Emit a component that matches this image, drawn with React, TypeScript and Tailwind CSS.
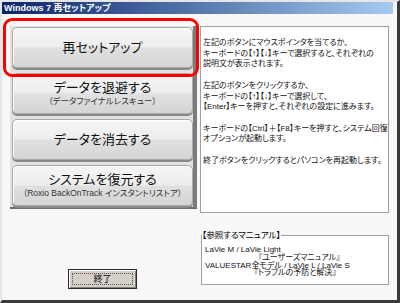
import React from "react";

function Btn({ title, sub }: { title: string; sub?: string }) {
  return (
    <div className="h-[41px] rounded-[5px] border border-[#a9a9a9] bg-[linear-gradient(#f6f6f6,#ededed_48%,#e0e0e0_52%,#d5d5d5)] shadow-[inset_1px_1px_0_#ffffff,0_2px_0_#8a8a8a] flex flex-col items-center justify-center">
      <div className="text-[13px] leading-[15px] text-[#111111]">{title}</div>
      {sub && <div className="text-[8.5px] leading-[11px] text-[#333333] mt-[1px]">{sub}</div>}
    </div>
  );
}

export default function App() {
  return (
    <div className="w-[400px] h-[303px] flex flex-col bg-[#f8f8f8] border-l-2 border-t-2 border-l-[#e6e6e6] border-t-[#e6e6e6] border-r-[3px] border-b-[3px] border-r-[#3a3a3a] border-b-[#3a3a3a] font-['Liberation_Sans','Noto_Sans_CJK_JP',sans-serif] [font-feature-settings:'palt'] text-black overflow-hidden">
      <div className="h-[12px] mr-[4px] bg-[linear-gradient(90deg,#0a246a,#a6caf0)] flex items-center pl-[2px]">
        <span className="text-white font-bold text-[9px] leading-[12px]">Windows 7 再セットアップ</span>
      </div>
      <div className="flex flex-row items-start">
        <div className="w-[198px] flex flex-col">
          <div className="relative ml-[8px] mt-[12px] w-[187px]">
            <div className="flex flex-col gap-[5px] pt-[1px] pb-[1px] pl-[2px] bg-[#e2e2e2] border-r-4 border-r-[#7b7b7b] border-b-[2px] border-b-[#6a6a6a]">
              <Btn title="再セットアップ" />
              <Btn title="データを退避する" sub="（データファイナルレスキュー）" />
              <Btn title="データを消去する" />
              <Btn title="システムを復元する" sub="（Roxio BackOnTrack インスタントリストア）" />
            </div>
            <div className="absolute left-[-7px] top-[-8px] w-[196px] h-[59px] rounded-[9px] border-[3px] border-[#ff0000]" />
          </div>
          <div className="ml-[66px] mt-[60px] w-[69px] h-[20px] bg-[#d4d0c8] border border-[#2a2a2a] shadow-[inset_1px_1px_0_#ffffff,inset_-1px_-1px_0_#808080] p-[3px]">
            <div className="h-full border border-dotted border-[#555555] flex items-center justify-center text-[9px] leading-none">終了</div>
          </div>
        </div>
        <div className="flex flex-col">
          <div className="mt-[12px] w-[189px] h-[187px] bg-white border border-[#a0a0a0] pt-[11px] pl-[2px] text-[8px] leading-[10.7px] text-[#111111]">
            <p>左記のボタンにマウスポインタを当てるか、</p>
            <p>キーボードの【↑】【↓】キーで選択すると、それぞれの</p>
            <p>説明文が表示されます。</p>
            <p className="h-[10.7px]"></p>
            <p>左記のボタンをクリックするか、</p>
            <p>キーボードの【↑】【↓】キーで選択して、</p>
            <p>【Enter】キーを押すと、それぞれの設定に進みます。</p>
            <p className="h-[10.7px]"></p>
            <p>キーボードの【Ctrl】＋【F8】キーを押すと、システム回復</p>
            <p>オプションが起動します。</p>
            <p className="h-[10.7px]"></p>
            <p>終了ボタンをクリックするとパソコンを再起動します。</p>
          </div>
          <fieldset className="mt-[17px] ml-[1px] w-[188px] h-[55px] border border-[#a0a0a0] bg-white px-[3px] pb-[2px]">
            <legend className="text-[8.5px] leading-[10px] px-0 ml-[-3px] bg-[#f8f8f8]">【参照するマニュアル】</legend>
            <div className="text-[8px] leading-[7.8px] text-[#111111] mt-[6px]">
              <p>LaVie M / LaVie Light</p>
              <p className="pl-[53px]">『ユーザーズマニュアル』</p>
              <p>VALUESTAR全モデル / LaVie L / LaVie S</p>
              <p className="pl-[49px]">『トラブルの予防と解決』</p>
            </div>
          </fieldset>
        </div>
      </div>
    </div>
  );
}
